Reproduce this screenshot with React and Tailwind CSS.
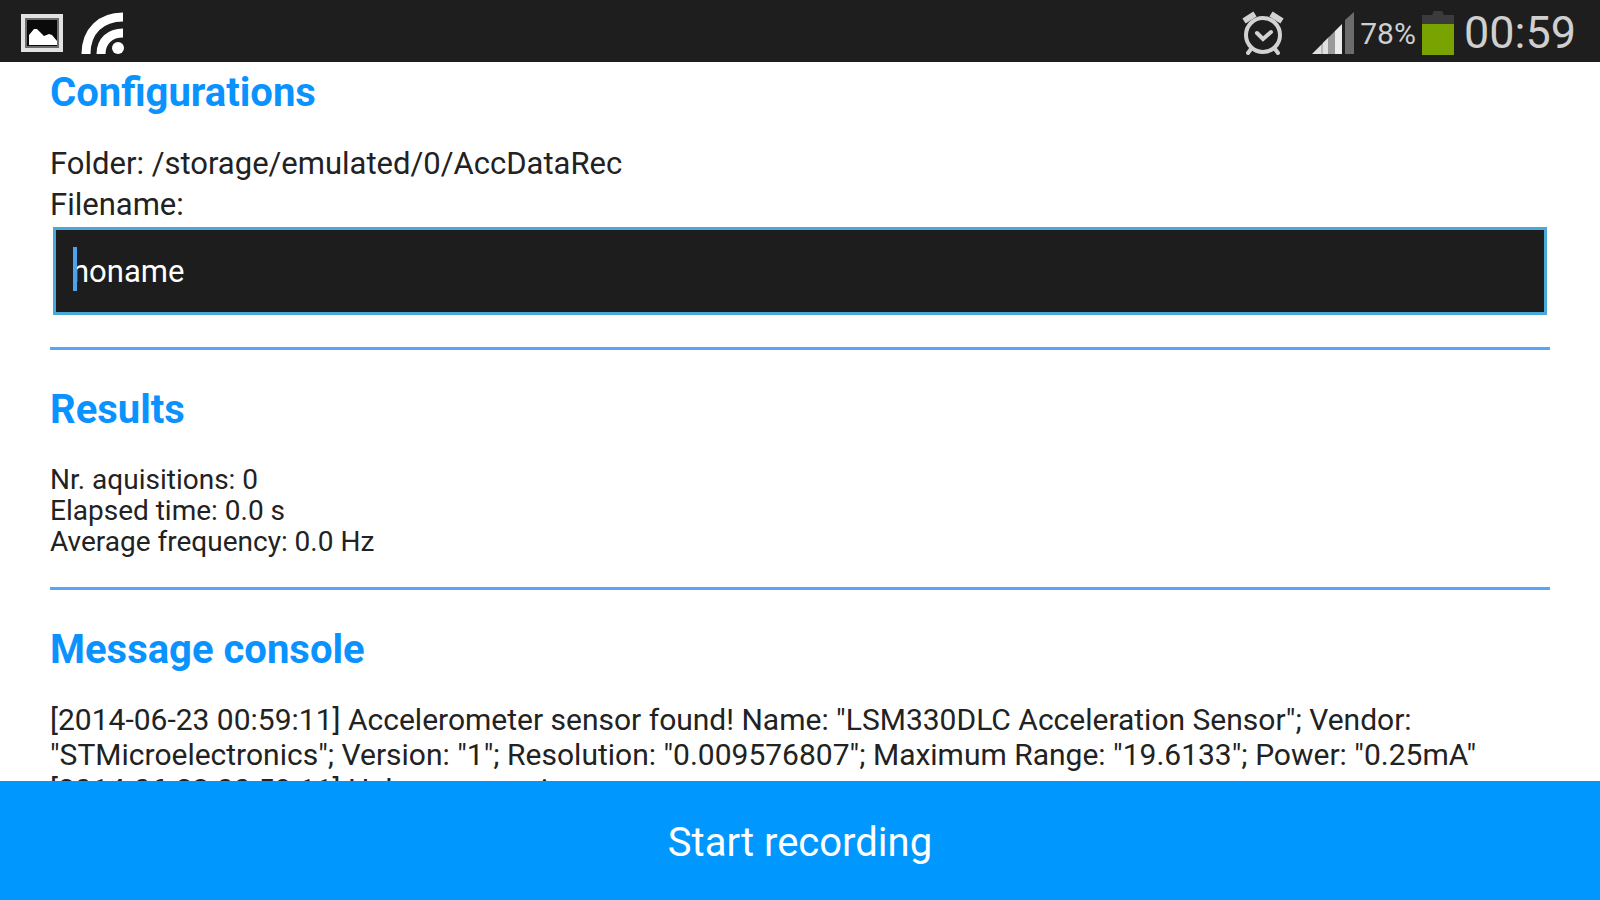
import { useState } from 'react';

const messages = [
  '[2014-06-23 00:59:11] Accelerometer sensor found! Name: "LSM330DLC Acceleration Sensor"; Vendor: "STMicroelectronics"; Version: "1"; Resolution: "0.009576807"; Maximum Range: "19.6133"; Power: "0.25mA"',
  '[2014-06-23 00:59:11] Help on menu icon',
];

function PictureIcon() {
  return (
    <svg viewBox="0 0 42 38" className="h-[38px] w-[42px]" aria-hidden="true">
      <path d="M2 2h38v34H2z" fill="#0a0a0a" stroke="#e2e2e2" strokeWidth="4" />
      <path d="M5 5h32v28H5z" fill="none" stroke="#6b6b6b" strokeWidth="2" />
      <path d="M8 31V21l5-6h3l7 7 5-2 3 1 5 6v4z" fill="#fff" />
    </svg>
  );
}

function FeedIcon() {
  return (
    <svg viewBox="0 0 44 44" className="h-[44px] w-[44px]" aria-hidden="true">
      <g fill="none" stroke="#fff" strokeWidth="9" strokeLinejoin="round">
        <path d="M5 43C5 20 20 6 42 6" />
        <path d="M20 43c0-13 9-21 22-21" />
      </g>
      <circle cx="37" cy="37" r="6" fill="#fff" />
    </svg>
  );
}

function AlarmIcon() {
  return (
    <svg viewBox="0 0 42 44" className="h-[44px] w-[42px]" aria-hidden="true">
      <g fill="none" stroke="#d2d2d2" strokeLinecap="round">
        <circle cx="21" cy="24" r="17" strokeWidth="4" />
        <path d="M15 22l6 6 8-7" strokeWidth="4" />
        <path d="M9 38l-3 4M33 38l3 4" strokeWidth="4" />
        <path d="M2 10L13 3M29 3l11 7" strokeWidth="6" strokeLinecap="butt" />
      </g>
    </svg>
  );
}

function SignalIcon() {
  return (
    <svg viewBox="0 0 42 42" className="h-[42px] w-[42px]" aria-hidden="true">
      <path d="M0 42L9 33V42z" fill="#e0e0e0" />
      <path d="M9 33l8-8v17H9z" fill="#b8b8b8" />
      <path d="M11 31l5-5v16h-5z" fill="#e0e0e0" />
      <path d="M16 26l7-7v23h-7z" fill="#9a9a9a" />
      <path d="M23 19l7-7v30h-7z" fill="#ebebeb" />
      <path d="M33 8l9-8v42h-9z" fill="#6c6c6c" />
    </svg>
  );
}

function BatteryIcon() {
  return (
    <svg viewBox="0 0 32 44" className="h-[44px] w-[32px]" aria-hidden="true">
      <path d="M0 4h10l2-4h8l2 4h10v10H0z" fill="#3b3b3d" />
      <path d="M0 13h32v31H0z" fill="#78a300" />
    </svg>
  );
}

function StatusBar() {
  return (
    <header className="flex h-[62px] shrink-0 items-center justify-between bg-[#1e1e1e] pt-1 pr-6 pl-[21px] text-[#cfcfcf]">
      <div className="flex items-center gap-[18px]">
        <PictureIcon />
        <FeedIcon />
      </div>
      <div className="flex items-center">
        <AlarmIcon />
        <div className="flex items-center gap-1.5 pl-7">
          <SignalIcon />
          <span className="text-[30px]">78%</span>
          <BatteryIcon />
        </div>
        <span className="pl-2.5 text-[45px] leading-[48px]">00:59</span>
      </div>
    </header>
  );
}

function Section({ title, children }) {
  return (
    <section>
      <h2 className="text-[40px] leading-[48px] font-bold text-[#0a93ff]">{title}</h2>
      {children}
    </section>
  );
}

function Divider() {
  return <hr className="mb-9 h-[3px] border-0 bg-[#5ba4fb]" />;
}

export default function App() {
  const [filename, setFilename] = useState('noname');

  return (
    <div className="flex h-screen flex-col bg-white font-['Roboto',sans-serif] text-[#222]">
      <StatusBar />
      <main className="flex-1 overflow-hidden px-[50px] pt-[7px]">
        <Section title="Configurations">
          <div className="pt-[26px] pb-8 text-[31px] leading-[41px]">
            <p>Folder: /storage/emulated/0/AccDataRec</p>
            <label htmlFor="filename" className="block">
              Filename:
            </label>
            <div className="relative mx-[3px] mt-0.5">
              <input
                id="filename"
                type="text"
                value={filename}
                onChange={(e) => setFilename(e.target.value)}
                className="block h-[88px] w-full border-3 border-[#4aa9d8] bg-[#1d1d1d] px-4 text-white outline-none"
              />
              <span className="pointer-events-none absolute top-5 left-5 h-11 w-1 bg-[#4ba3f0]" />
            </div>
          </div>
        </Section>
        <Divider />
        <Section title="Results">
          <div className="pt-[30px] pb-[30px] text-[28px] leading-[31px]">
            <p>Nr. aquisitions: 0</p>
            <p>Elapsed time: 0.0 s</p>
            <p>Average frequency: 0.0 Hz</p>
          </div>
        </Section>
        <Divider />
        <Section title="Message console">
          <div className="pt-7 text-[30px] leading-[35px]">
            {messages.map((message) => (
              <p key={message}>{message}</p>
            ))}
          </div>
        </Section>
      </main>
      <button type="button" className="h-[119px] shrink-0 bg-[#0098ff] pt-1 text-[40px] text-white">
        Start recording
      </button>
    </div>
  );
}
